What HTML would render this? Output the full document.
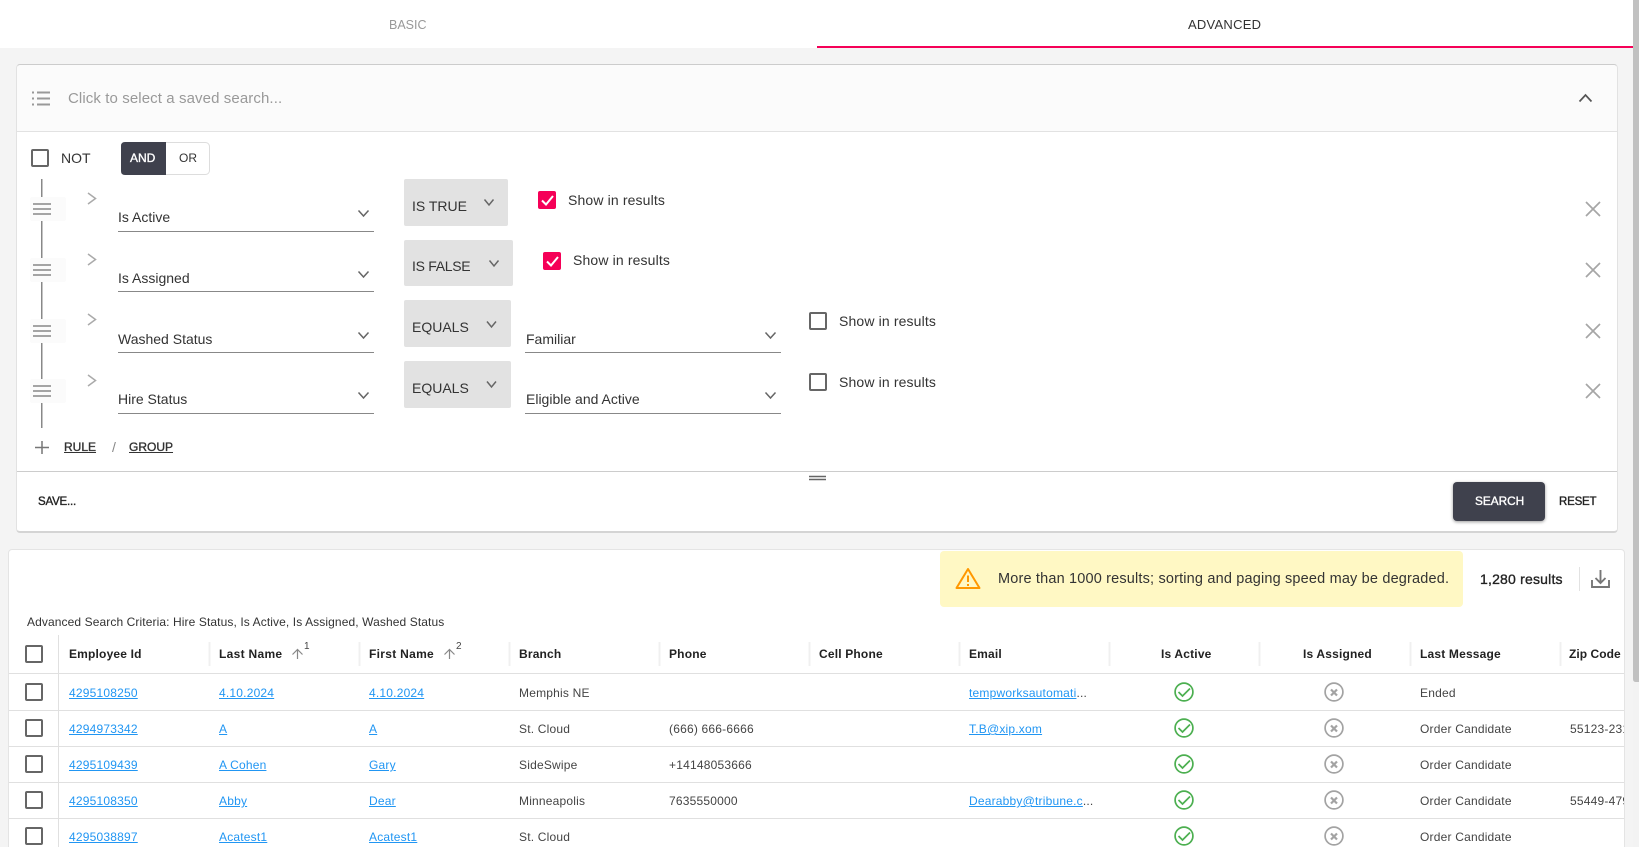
<!DOCTYPE html>
<html lang="en">
<head>
<meta charset="utf-8">
<title>Advanced Search</title>
<style>
html,body{margin:0;padding:0;width:1639px;height:847px;overflow:hidden}
body{background:#f4f4f4;font-family:"Liberation Sans",sans-serif;color:#333}
#page{position:absolute;left:0;top:0;width:1639px;height:847px;overflow:hidden;background:#f4f4f4}
.box{position:absolute;box-sizing:border-box}
.t{position:absolute;white-space:nowrap;line-height:20px;font-size:14px}
.s{font-size:12px;letter-spacing:.2px;color:#444}
.h{font-size:12px;font-weight:bold;letter-spacing:.18px;color:#222}
.sb{-webkit-text-stroke:.35px currentColor}
a{color:#2196f3;text-decoration:underline}
svg{position:absolute;left:0;top:0}
</style>
</head>
<body>
<div id="page">
<div class="box" style="left:0;top:0;width:1634px;height:48px;background:#fff"></div>
<div class="box" style="left:16px;top:64px;width:1602px;height:469px;background:#fff;border:1px solid #e2e2e2;border-top-color:#ccc;border-bottom:2px solid #d4d4d4;border-radius:4px"></div>
<div class="box" style="left:17px;top:65px;width:1600px;height:66px;background:#fbfbfb;border-radius:4px 4px 0 0"></div>
<div class="box" style="left:8px;top:549px;width:1617px;height:320px;background:#fff;border:1px solid #e4e4e4;border-radius:4px"></div>
<div class="box" style="left:940px;top:551px;width:523px;height:56px;background:#fff8c4;border-radius:4px"></div>
<div class="box" style="left:1453px;top:482px;width:92px;height:39px;background:#3f414d;border-radius:4px;box-shadow:0 1px 3px rgba(0,0,0,.4)"></div>

<svg width="1639" height="847" viewBox="0 0 1639 847" fill="none">
  <rect x="1633" y="0" width="6" height="847" fill="#f3f3f3"/>
  <path d="M1633 0H1639V682H1636Q1633 682 1633 679Z" fill="#c1c1c1"/>
  <rect x="817" y="46" width="816" height="2" fill="#f50057"/>
  <!-- list icon -->
  <g stroke="#999" stroke-width="2">
    <path d="M32 92.5H34M37 92.5H50M32 98.5H34M37 98.5H50M32 104.5H34M37 104.5H50"/>
  </g>
  <rect x="17" y="131" width="1600" height="1" fill="#e2e2e2"/>
  <path d="M1579.5 101.5L1585.5 95L1591.5 101.5" stroke="#555" stroke-width="1.7"/>
  <!-- NOT checkbox -->
  <rect x="32" y="150" width="16" height="16" rx="1" stroke="#666" stroke-width="2"/>
  <!-- AND / OR -->
  <rect x="121.5" y="142.5" width="88" height="32" rx="4" fill="#fff" stroke="#ddd"/>
  <path d="M125 142H166V175H125Q121 175 121 171V146Q121 142 125 142Z" fill="#3f414d"/>
  <!-- vertical drag line -->
  <g stroke="#888" stroke-width="1.5">
    <path d="M41.75 179V197M41.75 221V258M41.75 282V319M41.75 343V379M41.75 403V428"/>
  </g>
  <g fill="#fbfbfb">
    <rect x="30" y="197" width="36" height="24" rx="2"/>
    <rect x="30" y="258" width="36" height="24" rx="2"/>
    <rect x="30" y="319" width="36" height="24" rx="2"/>
    <rect x="30" y="379" width="36" height="24" rx="2"/>
  </g>
  <g stroke="#888" stroke-width="1.6">
    <path d="M33 204H51M33 209H51M33 214H51"/>
    <path d="M33 265H51M33 270H51M33 275H51"/>
    <path d="M33 326H51M33 331H51M33 336H51"/>
    <path d="M33 386H51M33 391H51M33 396H51"/>
  </g>
  <!-- expand chevrons -->
  <g stroke="#aaa" stroke-width="1.5">
    <path d="M88 193L95.5 198.5L88 204"/>
    <path d="M88 254L95.5 259.5L88 265"/>
    <path d="M88 314L95.5 319.5L88 325"/>
    <path d="M88 375L95.5 380.5L88 386"/>
  </g>
  <!-- field underlines -->
  <g fill="#888">
    <rect x="118" y="231" width="256" height="1"/>
    <rect x="118" y="291" width="256" height="1"/>
    <rect x="118" y="352" width="256" height="1"/>
    <rect x="118" y="413" width="256" height="1"/>
    <rect x="525" y="352" width="256" height="1"/>
    <rect x="525" y="413" width="256" height="1"/>
  </g>
  <!-- operator backgrounds -->
  <g fill="#e2e2e2">
    <rect x="404" y="179" width="104" height="47" rx="2"/>
    <rect x="404" y="240" width="109" height="46" rx="2"/>
    <rect x="404" y="300" width="107" height="47" rx="2"/>
    <rect x="404" y="361" width="107" height="47" rx="2"/>
  </g>
  <!-- chevrons down -->
  <g stroke="#666" stroke-width="1.5">
    <path d="M358.5 210.5L363.5 216L368.5 210.5"/>
    <path d="M358.5 271.5L363.5 277L368.5 271.5"/>
    <path d="M358.5 332.5L363.5 338L368.5 332.5"/>
    <path d="M358.5 392.5L363.5 398L368.5 392.5"/>
    <path d="M484.5 199.5L489 205L493.5 199.5"/>
    <path d="M489.5 260.5L494 266L498.5 260.5"/>
    <path d="M487 321.5L491.5 327L496 321.5"/>
    <path d="M487 381.5L491.5 387L496 381.5"/>
    <path d="M765.5 332.5L770.5 338L775.5 332.5"/>
    <path d="M765.5 392.5L770.5 398L775.5 392.5"/>
  </g>
  <!-- show in results -->
  <rect x="538" y="191" width="18" height="18" rx="2" fill="#f50057"/>
  <path d="M542 200.5L546 204.5L553 196" stroke="#fff" stroke-width="2"/>
  <rect x="543" y="252" width="18" height="18" rx="2" fill="#f50057"/>
  <path d="M547 261.5L551 265.5L558 257" stroke="#fff" stroke-width="2"/>
  <rect x="810" y="313" width="16" height="16" rx="1" stroke="#666" stroke-width="2"/>
  <rect x="810" y="374" width="16" height="16" rx="1" stroke="#666" stroke-width="2"/>
  <!-- delete X -->
  <g stroke="#a6a6a6" stroke-width="1.7">
    <path d="M1586 202L1600 216M1600 202L1586 216"/>
    <path d="M1586 263L1600 277M1600 263L1586 277"/>
    <path d="M1586 324L1600 338M1600 324L1586 338"/>
    <path d="M1586 384L1600 398M1600 384L1586 398"/>
  </g>
  <!-- plus -->
  <path d="M35 447.5H49M42 441V454" stroke="#777" stroke-width="1.5"/>
  <!-- footer divider -->
  <rect x="17" y="471" width="1600" height="1" fill="#ccc"/>
  <path d="M809 476.5H826M809 479.5H826" stroke="#666" stroke-width="1.4"/>
  <!-- warning -->
  <path d="M968 569L979.5 588H956.5Z" stroke="#ff9800" stroke-width="2" stroke-linejoin="round"/>
  <path d="M968 575.5V582M968 584V586" stroke="#ff9800" stroke-width="2"/>
  <!-- download -->
  <rect x="1579" y="567" width="1" height="24" fill="#e2e2e2"/>
  <path d="M1592 580V587H1609V580M1600.5 570V583M1595.5 578L1600.5 583L1605.5 578" stroke="#777" stroke-width="1.9"/>
  <!-- table lines -->
  <g fill="#e0e0e0">
    <rect x="9" y="673" width="1615" height="1"/>
    <rect x="9" y="710" width="1615" height="1"/>
    <rect x="9" y="746" width="1615" height="1"/>
    <rect x="9" y="782" width="1615" height="1"/>
    <rect x="9" y="818" width="1615" height="1"/>
    <rect x="58" y="635" width="1" height="212"/>
  </g>
  <g fill="#f0f0f0">
    <rect x="208.500" y="642" width="2" height="24"/>
    <rect x="358.500" y="642" width="2" height="24"/>
    <rect x="508.500" y="642" width="2" height="24"/>
    <rect x="658.500" y="642" width="2" height="24"/>
    <rect x="808.500" y="642" width="2" height="24"/>
    <rect x="958.500" y="642" width="2" height="24"/>
    <rect x="1108.500" y="642" width="2" height="24"/>
    <rect x="1258.500" y="642" width="2" height="24"/>
    <rect x="1409.500" y="642" width="2" height="24"/>
    <rect x="1559.500" y="642" width="2" height="24"/>
  </g>
  <!-- sort arrows -->
  <path d="M297.500 659V650M292.500 654.500L297.500 649.500L302.500 654.500M449.500 659V650M444.500 654.500L449.500 649.500L454.500 654.500" stroke="#888" stroke-width="1.2"/>
  <!-- table checkboxes -->
  <g stroke="#666" stroke-width="2">
    <rect x="26" y="646" width="16" height="16" rx="1"/>
    <rect x="26" y="684" width="16" height="16" rx="1"/>
    <rect x="26" y="720" width="16" height="16" rx="1"/>
    <rect x="26" y="756" width="16" height="16" rx="1"/>
    <rect x="26" y="792" width="16" height="16" rx="1"/>
    <rect x="26" y="828" width="16" height="16" rx="1"/>
  </g>
  <!-- is active -->
  <g stroke="#4caf50" stroke-width="1.7">
    <circle cx="1184" cy="692" r="8.9"/><path d="M1178.500 692L1182.500 696L1190 688.500"/>
    <circle cx="1184" cy="728" r="8.9"/><path d="M1178.500 728L1182.500 732L1190 724.500"/>
    <circle cx="1184" cy="764" r="8.9"/><path d="M1178.500 764L1182.500 768L1190 760.500"/>
    <circle cx="1184" cy="800" r="8.9"/><path d="M1178.500 800L1182.500 804L1190 796.500"/>
    <circle cx="1184" cy="836" r="8.9"/><path d="M1178.500 836L1182.500 840L1190 832.500"/>
  </g>
  <!-- is assigned -->
  <g stroke="#a3a3a3">
    <circle cx="1334" cy="692" r="8.9" stroke-width="1.7"/><path d="M1331 689.500L1337 695.500M1337 689.500L1331 695.500" stroke-width="2.200"/>
    <circle cx="1334" cy="728" r="8.9" stroke-width="1.7"/><path d="M1331 725.500L1337 731.500M1337 725.500L1331 731.500" stroke-width="2.200"/>
    <circle cx="1334" cy="764" r="8.9" stroke-width="1.7"/><path d="M1331 761.500L1337 767.500M1337 761.500L1331 767.500" stroke-width="2.200"/>
    <circle cx="1334" cy="800" r="8.9" stroke-width="1.7"/><path d="M1331 797.500L1337 803.500M1337 797.500L1331 803.500" stroke-width="2.200"/>
    <circle cx="1334" cy="836" r="8.9" stroke-width="1.7"/><path d="M1331 833.500L1337 839.500M1337 833.500L1331 839.500" stroke-width="2.200"/>
  </g>
</svg>

<!-- tabs -->
<div class="t" style="left:389px;top:15px;font-size:12.500px;color:#999">BASIC</div>
<div class="t" style="left:1188px;top:15px;font-size:13px;letter-spacing:.25px;color:#333">ADVANCED</div>
<!-- saved search -->
<div class="t" style="left:68px;top:89px;font-size:15px;letter-spacing:.1px;color:#999">Click to select a saved search...</div>
<div class="t" style="left:61px;top:148px">NOT</div>
<div class="t sb" style="left:130px;top:148px;font-size:12px;color:#fff">AND</div>
<div class="t" style="left:179px;top:148px;font-size:12px;color:#333">OR</div>
<!-- rule rows -->
<div class="t" style="left:118px;top:207px">Is Active</div>
<div class="t" style="left:118px;top:268px">Is Assigned</div>
<div class="t" style="left:118px;top:329px">Washed Status</div>
<div class="t" style="left:118px;top:389px">Hire Status</div>
<div class="t" style="left:412px;top:196px">IS TRUE</div>
<div class="t" style="left:412px;top:256px;letter-spacing:-.3px">IS FALSE</div>
<div class="t" style="left:412px;top:317px">EQUALS</div>
<div class="t" style="left:412px;top:378px">EQUALS</div>
<div class="t" style="left:526px;top:329px">Familiar</div>
<div class="t" style="left:526px;top:389px">Eligible and Active</div>
<div class="t" style="left:568px;top:190px;letter-spacing:.14px">Show in results</div>
<div class="t" style="left:573px;top:250px;letter-spacing:.14px">Show in results</div>
<div class="t" style="left:839px;top:311px;letter-spacing:.14px">Show in results</div>
<div class="t" style="left:839px;top:372px;letter-spacing:.14px">Show in results</div>
<div class="t sb" style="left:64px;top:437px;font-size:12px;color:#333;text-decoration:underline">RULE</div>
<div class="t" style="left:112px;top:437px;font-size:14px;color:#888">/</div>
<div class="t sb" style="left:129px;top:437px;font-size:12px;color:#333;text-decoration:underline">GROUP</div>
<div class="t sb" style="left:38px;top:492px;font-size:11.500px;letter-spacing:-.2px;color:#222">SAVE...</div>
<div class="t sb" style="left:1475px;top:491px;font-size:11.800px;color:#fff">SEARCH</div>
<div class="t sb" style="left:1559px;top:492px;font-size:11.500px;letter-spacing:-.2px;color:#222">RESET</div>
<!-- results bar -->
<div class="t" style="left:998px;top:569px;font-size:14.500px;letter-spacing:.17px;color:#333">More than 1000 results; sorting and paging speed may be degraded.</div>
<div class="t sb" style="left:1480px;top:569px;letter-spacing:.2px;color:#222">1,280 results</div>
<div class="t" style="left:27px;top:612px;font-size:12px;letter-spacing:.1px;color:#333">Advanced Search Criteria: Hire Status, Is Active, Is Assigned, Washed Status</div>

<!-- table text -->
<div class="box" style="left:0;top:630px;width:1624px;height:217px;overflow:hidden">
  <div style="position:absolute;left:0;top:-630px;width:1700px;height:847px">
    <div class="t h" style="left:69px;top:644px">Employee Id</div>
    <div class="t h" style="left:219px;top:644px;letter-spacing:.3px">Last Name</div>
    <div class="t" style="left:304px;top:637px;font-size:10px;color:#444">1</div>
    <div class="t h" style="left:369px;top:644px;letter-spacing:.3px">First Name</div>
    <div class="t" style="left:456px;top:637px;font-size:10px;color:#444">2</div>
    <div class="t h" style="left:519px;top:644px">Branch</div>
    <div class="t h" style="left:669px;top:644px">Phone</div>
    <div class="t h" style="left:819px;top:644px">Cell Phone</div>
    <div class="t h" style="left:969px;top:644px">Email</div>
    <div class="t h" style="left:1161px;top:644px">Is Active</div>
    <div class="t h" style="left:1303px;top:644px">Is Assigned</div>
    <div class="t h" style="left:1420px;top:644px">Last Message</div>
    <div class="t h" style="left:1569px;top:644px;letter-spacing:.05px">Zip Code</div>

    <div class="t s" style="left:69px;top:683px"><a>4295108250</a></div>
    <div class="t s" style="left:219px;top:683px"><a>4.10.2024</a></div>
    <div class="t s" style="left:369px;top:683px"><a>4.10.2024</a></div>
    <div class="t s" style="left:519px;top:683px">Memphis NE</div>
    <div class="t s" style="left:969px;top:683px"><a>tempworksautomati</a>...</div>
    <div class="t s" style="left:1420px;top:683px">Ended</div>

    <div class="t s" style="left:69px;top:719px"><a>4294973342</a></div>
    <div class="t s" style="left:219px;top:719px"><a>A</a></div>
    <div class="t s" style="left:369px;top:719px"><a>A</a></div>
    <div class="t s" style="left:519px;top:719px">St. Cloud</div>
    <div class="t s" style="left:669px;top:719px">(666) 666-6666</div>
    <div class="t s" style="left:969px;top:719px"><a>T.B@xip.xom</a></div>
    <div class="t s" style="left:1420px;top:719px">Order Candidate</div>
    <div class="t s" style="left:1570px;top:719px">55123-2311</div>

    <div class="t s" style="left:69px;top:755px"><a>4295109439</a></div>
    <div class="t s" style="left:219px;top:755px"><a>A Cohen</a></div>
    <div class="t s" style="left:369px;top:755px"><a>Gary</a></div>
    <div class="t s" style="left:519px;top:755px">SideSwipe</div>
    <div class="t s" style="left:669px;top:755px">+14148053666</div>
    <div class="t s" style="left:1420px;top:755px">Order Candidate</div>

    <div class="t s" style="left:69px;top:791px"><a>4295108350</a></div>
    <div class="t s" style="left:219px;top:791px"><a>Abby</a></div>
    <div class="t s" style="left:369px;top:791px"><a>Dear</a></div>
    <div class="t s" style="left:519px;top:791px">Minneapolis</div>
    <div class="t s" style="left:669px;top:791px">7635550000</div>
    <div class="t s" style="left:969px;top:791px"><a>Dearabby@tribune.c</a>...</div>
    <div class="t s" style="left:1420px;top:791px">Order Candidate</div>
    <div class="t s" style="left:1570px;top:791px">55449-4790</div>

    <div class="t s" style="left:69px;top:827px"><a>4295038897</a></div>
    <div class="t s" style="left:219px;top:827px"><a>Acatest1</a></div>
    <div class="t s" style="left:369px;top:827px"><a>Acatest1</a></div>
    <div class="t s" style="left:519px;top:827px">St. Cloud</div>
    <div class="t s" style="left:1420px;top:827px">Order Candidate</div>
  </div>
</div>
</div>
</body>
</html>
